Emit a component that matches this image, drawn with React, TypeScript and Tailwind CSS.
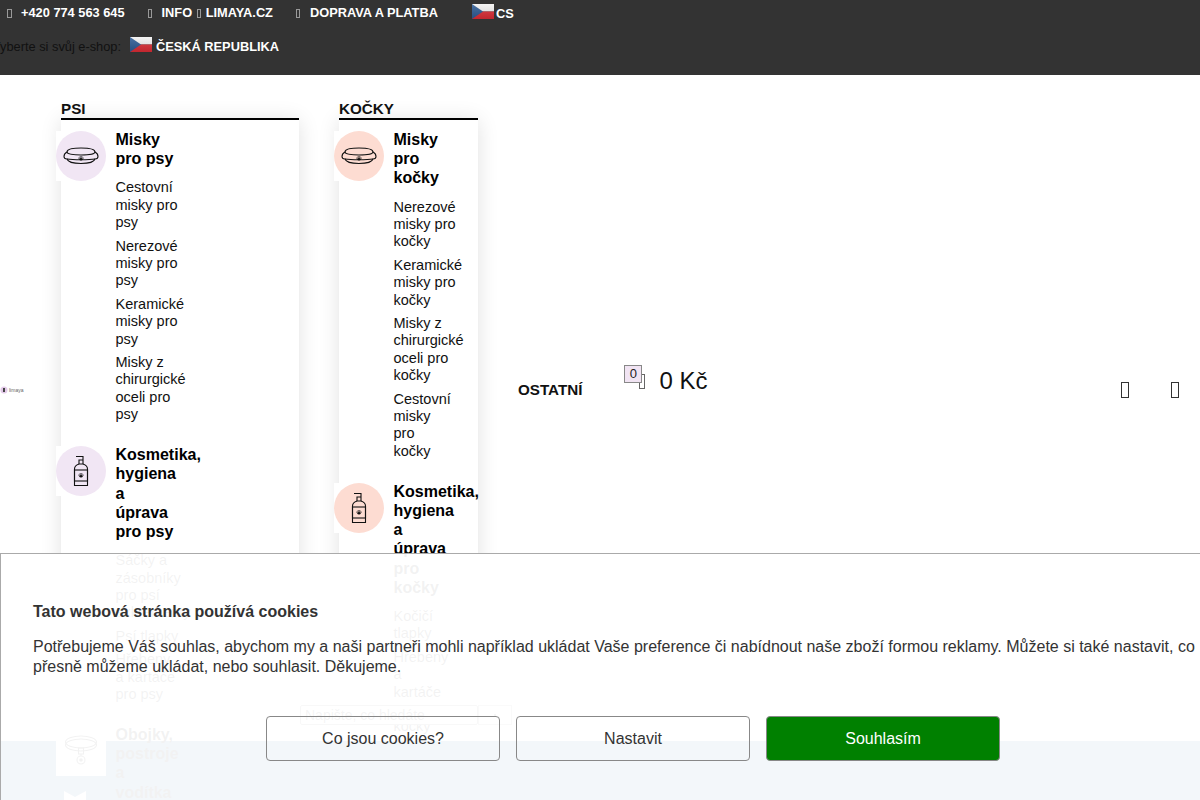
const psiItems = [
  {
    icon: 'bowl',
    title: 'Misky\npro psy',
    links: ['Cestovní\nmisky pro\npsy', 'Nerezové\nmisky pro\npsy', 'Keramické\nmisky pro\npsy', 'Misky z\nchirurgické\noceli pro\npsy'],
  },
  {
    icon: 'bottle',
    title: 'Kosmetika,\nhygiena\na\núprava\npro psy',
    links: ['Sáčky a\nzásobníky\npro psí\nexkrementy', 'Psí tlapky', 'Hřebeny\na kartáče\npro psy'],
  },
  {
    icon: 'collar',
    title: 'Obojky,\npostroje\na\nvodítka',
    links: [],
  },
]

const catItems = [
  {
    icon: 'bowl',
    title: 'Misky\npro\nkočky',
    links: ['Nerezové\nmisky pro\nkočky', 'Keramické\nmisky pro\nkočky', 'Misky z\nchirurgické\noceli pro\nkočky', 'Cestovní\nmisky\npro\nkočky'],
  },
  {
    icon: 'bottle',
    title: 'Kosmetika,\nhygiena\na\núprava\npro\nkočky',
    links: ['Kočičí\ntlapky', 'Hřebeny\na\nkartáče\npro\nkočky'],
  },
]

function Tofu({ className = 'h-[9px] w-[4.5px]' }: { className?: string }) {
  return <span className={`inline-block shrink-0 border border-current ${className}`} />
}

function Flag({ className = '' }: { className?: string }) {
  return (
    <svg width="22" height="15" viewBox="0 0 22 15" className={`shrink-0 ${className}`}>
      <defs>
        <linearGradient id="sheen" x1="0" y1="0" x2="0" y2="1">
          <stop offset="0" stopColor="#fff" stopOpacity="0.15" />
          <stop offset="1" stopColor="#000" stopOpacity="0.12" />
        </linearGradient>
      </defs>
      <rect width="22" height="7.5" fill="#f2f2f2" />
      <rect y="7.5" width="22" height="7.5" fill="#dc2c35" />
      <path d="M0 0 L11 7.5 L0 15 Z" fill="#2c5a94" />
      <rect width="22" height="15" fill="url(#sheen)" />
    </svg>
  )
}

function Paw({ cx, cy }: { cx: number; cy: number }) {
  return (
    <g fill="#111" stroke="none">
      <ellipse cx={cx} cy={cy + 0.8} rx="1.6" ry="1.3" />
      <circle cx={cx - 2} cy={cy - 0.4} r="0.7" />
      <circle cx={cx - 0.8} cy={cy - 1.5} r="0.7" />
      <circle cx={cx + 0.8} cy={cy - 1.5} r="0.7" />
      <circle cx={cx + 2} cy={cy - 0.4} r="0.7" />
    </g>
  )
}

function ItemIcon({ kind, tint }: { kind: string; tint: string }) {
  return (
    <div className="relative z-10 ml-[-5px] flex w-[50px] shrink-0 flex-col">
      <div className="h-[50px] w-[50px] bg-white">
        <div className={`flex h-[50px] w-[50px] items-center justify-center rounded-full ${tint}`}>
          {kind === 'bowl' && (
            <svg width="36" height="18" viewBox="0 0 36 18" fill="none" stroke="#111" strokeWidth="1.1">
              <path d="M4 5 C4 2 11 1 18 1 C25 1 32 2 32 5 C32 7 25 8 18 8 C11 8 4 7 4 5 Z" />
              <path d="M4 5 C2 6 1 8 1 9.5 C1 11.5 3 12 4 12 C5 15 10 16.5 18 16.5 C26 16.5 31 15 32 12 C33 12 35 11.5 35 9.5 C35 8 34 6 32 5" />
              <path d="M4 12 C10 13 26 13 32 12" />
              <Paw cx={18} cy={11.5} />
            </svg>
          )}
          {kind === 'bottle' && (
            <svg width="16" height="32" viewBox="0 0 16 32" fill="none" stroke="#111" strokeWidth="1.1">
              <path d="M3 1.5 H10 V5 M6 5 H10 V9 H6 Z" />
              <path d="M6 9 C3 10 1.5 12 1.5 14 V30.5 H14.5 V14 C14.5 12 13 10 10 9" />
              <rect x="1.5" y="15" width="13" height="11" />
              <Paw cx={8} cy={20.5} />
            </svg>
          )}
          {kind === 'collar' && (
            <svg width="34" height="32" viewBox="0 0 34 32" fill="none" stroke="#111" strokeWidth="1.1">
              <ellipse cx="17" cy="7" rx="15.5" ry="6" />
              <ellipse cx="17" cy="10" rx="15.5" ry="6" />
              <rect x="14.5" y="13" width="5" height="6" />
              <circle cx="17" cy="25" r="4" />
              <circle cx="17" cy="25" r="1.8" fill="#111" stroke="none" />
              <path d="M17 19 V21" />
            </svg>
          )}
        </div>
      </div>
      {kind === 'collar' && (
        <svg width="22" height="12" viewBox="0 0 22 12" className="mt-[15px] ml-[8px]">
          <path d="M0 0 L11 6 L22 0 V12 H0 Z" fill="#fff" />
        </svg>
      )}
    </div>
  )
}

function Column({ title, items, tint, width }: { title: string; items: typeof psiItems; tint: string; width: string }) {
  return (
    <div className={`relative z-10 self-start pt-[25px] ${width}`}>
      <div className="h-[20px] border-b-2 border-black text-[15.2px] leading-[17px] font-bold text-[#111]">{title}</div>
      <div className="h-[565px] bg-white pt-[11px] shadow-[0_0_20px_rgba(0,0,0,0.12)]">
        {items.map((item) => (
          <div key={item.title} className="mb-[22.5px] flex items-start">
            <ItemIcon kind={item.icon} tint={item.icon === 'collar' ? 'bg-white' : tint} />
            <div className="ml-[9.5px] mt-[-1px] whitespace-pre-line">
              <div className="text-[16px] leading-[19.2px] font-bold text-black">{item.title}</div>
              <div className="mt-[11px] flex flex-col gap-[6px]">
                {item.links.map((link) => (
                  <a key={link} className="text-[14.5px] leading-[17.4px] text-[#111]">
                    {link}
                  </a>
                ))}
              </div>
            </div>
          </div>
        ))}
      </div>
    </div>
  )
}

export default function App() {
  return (
    <div className="relative flex h-[800px] w-[1200px] flex-col overflow-hidden bg-white font-['Liberation_Sans',Arial,sans-serif]">
      {/* top bar */}
      <div className="h-[75px] shrink-0 bg-[#333333] text-[12.8px] font-bold text-white">
        <div className="flex h-[26px] items-center pl-[7px]">
          <Tofu className="h-[9px] w-[4.5px] text-[#999]" />
          <span className="ml-[9.5px]">+420 774 563 645</span>
          <Tofu className="ml-[23px] h-[9px] w-[4.5px] text-[#999]" />
          <span className="ml-[9.5px] flex items-center gap-[4.5px]">
            INFO <Tofu className="h-[9px] w-[4.5px] text-[#999]" /> LIMAYA.CZ
          </span>
          <Tofu className="ml-[23px] h-[9px] w-[4.5px] text-[#999]" />
          <span className="ml-[9.5px]">DOPRAVA A PLATBA</span>
          <span className="ml-[34px] flex items-start gap-[2px] self-start pt-[4px]">
            <Flag />
            <span className="mt-[-0.5px]">CS</span>
          </span>
        </div>
        <div className="mt-[11px] flex items-center">
          <span className="ml-[-8px] font-normal text-[#111]">Vyberte si svůj e-shop:</span>
          <span className="ml-[9px] flex items-center gap-[4px]">
            <Flag className="-mt-[4px]" />
            <span>ČESKÁ REPUBLIKA</span>
          </span>
        </div>
      </div>

      {/* main nav */}
      <div className="flex h-[630px] shrink-0 items-center">
        <div className="flex w-[24px] shrink-0 items-center gap-[1px]">
          <svg width="8" height="8" viewBox="0 0 8 8">
            <circle cx="4" cy="4" r="3.5" fill="#e2c9e8" />
            <rect x="3" y="2" width="2" height="4" fill="#444" />
          </svg>
          <span className="text-[5px] leading-none text-[#666]">limaya</span>
        </div>
        <Column title="PSI" items={psiItems} tint="bg-[#f1e6f4]" width="ml-[37px] w-[238px]" />
        <Column title="KOČKY" items={catItems} tint="bg-[#fddcd2]" width="ml-[40px] w-[139px]" />
        <div className="ml-[40px] text-[15.2px] font-bold text-[#111]">OSTATNÍ</div>
        <div className="relative ml-[57px] flex items-center self-center pb-[18px]">
          <span className="absolute top-[-2px] left-[-15px] flex h-[18px] w-[18px] items-center justify-center border border-[#888] bg-[#f1e4f3] text-[13px] text-[#222]">
            0
          </span>
          <Tofu className="h-[15px] w-[6px] text-[#666]" />
          <span className="ml-[14px] text-[24px] leading-[28px] text-[#111]">0 Kč</span>
        </div>
        <Tofu className="ml-auto h-[16px] w-[8px] text-[#333]" />
        <Tofu className="mr-[21px] ml-[42px] h-[16px] w-[8px] text-[#333]" />
      </div>

      {/* search */}
      <div className="relative z-[15] flex h-[36px] shrink-0 items-start pl-[300px]">
        <div className="flex h-[20px] w-[178px] items-center rounded-[2px] border border-[#777] bg-white px-[4px] text-[14px] text-[#333]">
          Napište, co hledáte
        </div>
        <div className="flex h-[20px] w-[34px] items-center justify-center border border-[#999] bg-white">
          <Tofu className="text-[#555]" />
        </div>
      </div>

      <div className="flex-1 bg-[#235f9b]" />

      {/* cookie bar */}
      <div className="absolute top-[553px] left-0 z-20 h-[260px] w-[1266px] border border-[#aaaaaa] bg-white/95 px-[32px] pt-[48px] text-[#333]">
        <div className="text-[16px] leading-[20px] font-bold">Tato webová stránka používá cookies</div>
        <p className="mt-[14.5px] w-[1190px] text-[16px] leading-[20.8px]">
          Potřebujeme Váš souhlas, abychom my a naši partneři mohli například ukládat Vaše preference či nabídnout naše zboží formou reklamy. Můžete si také nastavit, co
          <br />
          přesně můžeme ukládat, nebo souhlasit. Děkujeme.
        </p>
        <div className="mt-[38px] flex justify-center gap-[16px]">
          <button className="h-[45px] w-[234px] rounded-[4px] border border-[#888] text-[16px]">Co jsou cookies?</button>
          <button className="h-[45px] w-[234px] rounded-[4px] border border-[#888] text-[16px]">Nastavit</button>
          <button className="h-[45px] w-[234px] rounded-[4px] border border-[#888] bg-[#008000] text-[16px] text-white">Souhlasím</button>
        </div>
      </div>
    </div>
  )
}
